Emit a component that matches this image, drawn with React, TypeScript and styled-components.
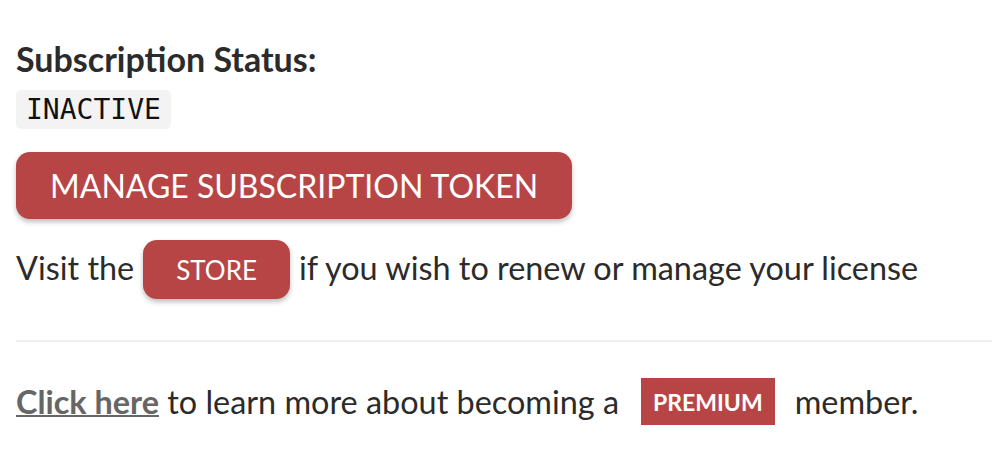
import React from "react";
import styled, { createGlobalStyle } from "styled-components";

const Global = createGlobalStyle`
  html, body { margin: 0; padding: 0; background: #ffffff; }
  body { font-family: Lato, "Open Sans", sans-serif; color: #2b2b2b; }
`;

const Page = styled.div`
  display: flex;
  flex-direction: column;
  align-items: flex-start;
  padding: 40px 0 0 16px;
`;

const Heading = styled.h3`
  margin: 0;
  font-size: 34px;
  font-weight: 700;
  line-height: 38px;
  color: #2b2b2b;
`;

const Code = styled.code`
  margin-top: 12px;
  display: inline-block;
  background: #f3f3f3;
  border-radius: 5px;
  padding: 0 10px;
  height: 39px;
  line-height: 39px;
  font-family: "DejaVu Sans Mono", monospace;
  font-size: 28px;
  color: #111;
`;

const BigButton = styled.button`
  margin-top: 23px;
  height: 67px;
  padding: 0 34px;
  border: none;
  border-radius: 14px;
  background: #b84545;
  color: #fff;
  font-family: Lato, sans-serif;
  font-size: 32px;
  box-shadow: 0 3px 5px rgba(0, 0, 0, 0.25);
`;

const Row = styled.div<{ $gap: number; $top: number; $align: string }>`
  display: flex;
  align-items: ${(p) => p.$align};
  gap: ${(p) => p.$gap}px;
  margin-top: ${(p) => p.$top}px;
  font-size: 32.4px;
  color: #2b2b2b;
`;

const SmallButton = styled.button`
  height: 59px;
  padding: 0 33px;
  border: none;
  border-radius: 14px;
  background: #b84545;
  color: #fff;
  font-family: Lato, sans-serif;
  font-size: 26px;
  box-shadow: 0 3px 5px rgba(0, 0, 0, 0.25);
`;

const Divider = styled.hr`
  align-self: stretch;
  margin: 41px 0 0 0;
  border: none;
  border-top: 2px solid #eeeeee;
`;

const Link = styled.a`
  color: #666;
  font-weight: 700;
  text-decoration: underline;
  text-decoration-thickness: 2px;
`;

const Badge = styled.span`
  display: inline-flex;
  align-items: center;
  height: 47px;
  padding: 0 12px;
  margin: 0 20px 0 22px;
  background: #b84545;
  color: #fff;
  font-size: 23px;
  font-weight: 700;
`;

const Text = styled.span``;

export default function App() {
  return (
    <>
      <Global />
      <Page>
        <Heading>Subscription Status:</Heading>
        <Code>INACTIVE</Code>
        <BigButton>MANAGE SUBSCRIPTION TOKEN</BigButton>
        <Row $gap={9} $top={21} $align="baseline">
          <Text>Visit the</Text>
          <SmallButton>STORE</SmallButton>
          <Text>if you wish to renew or manage your license</Text>
        </Row>
        <Divider />
        <Row $gap={0} $top={36} $align="center">
          <Link href="#">Click here</Link>
          <Text>&nbsp;to learn more about becoming a</Text>
          <Badge>PREMIUM</Badge>
          <Text>member.</Text>
        </Row>
      </Page>
    </>
  );
}
